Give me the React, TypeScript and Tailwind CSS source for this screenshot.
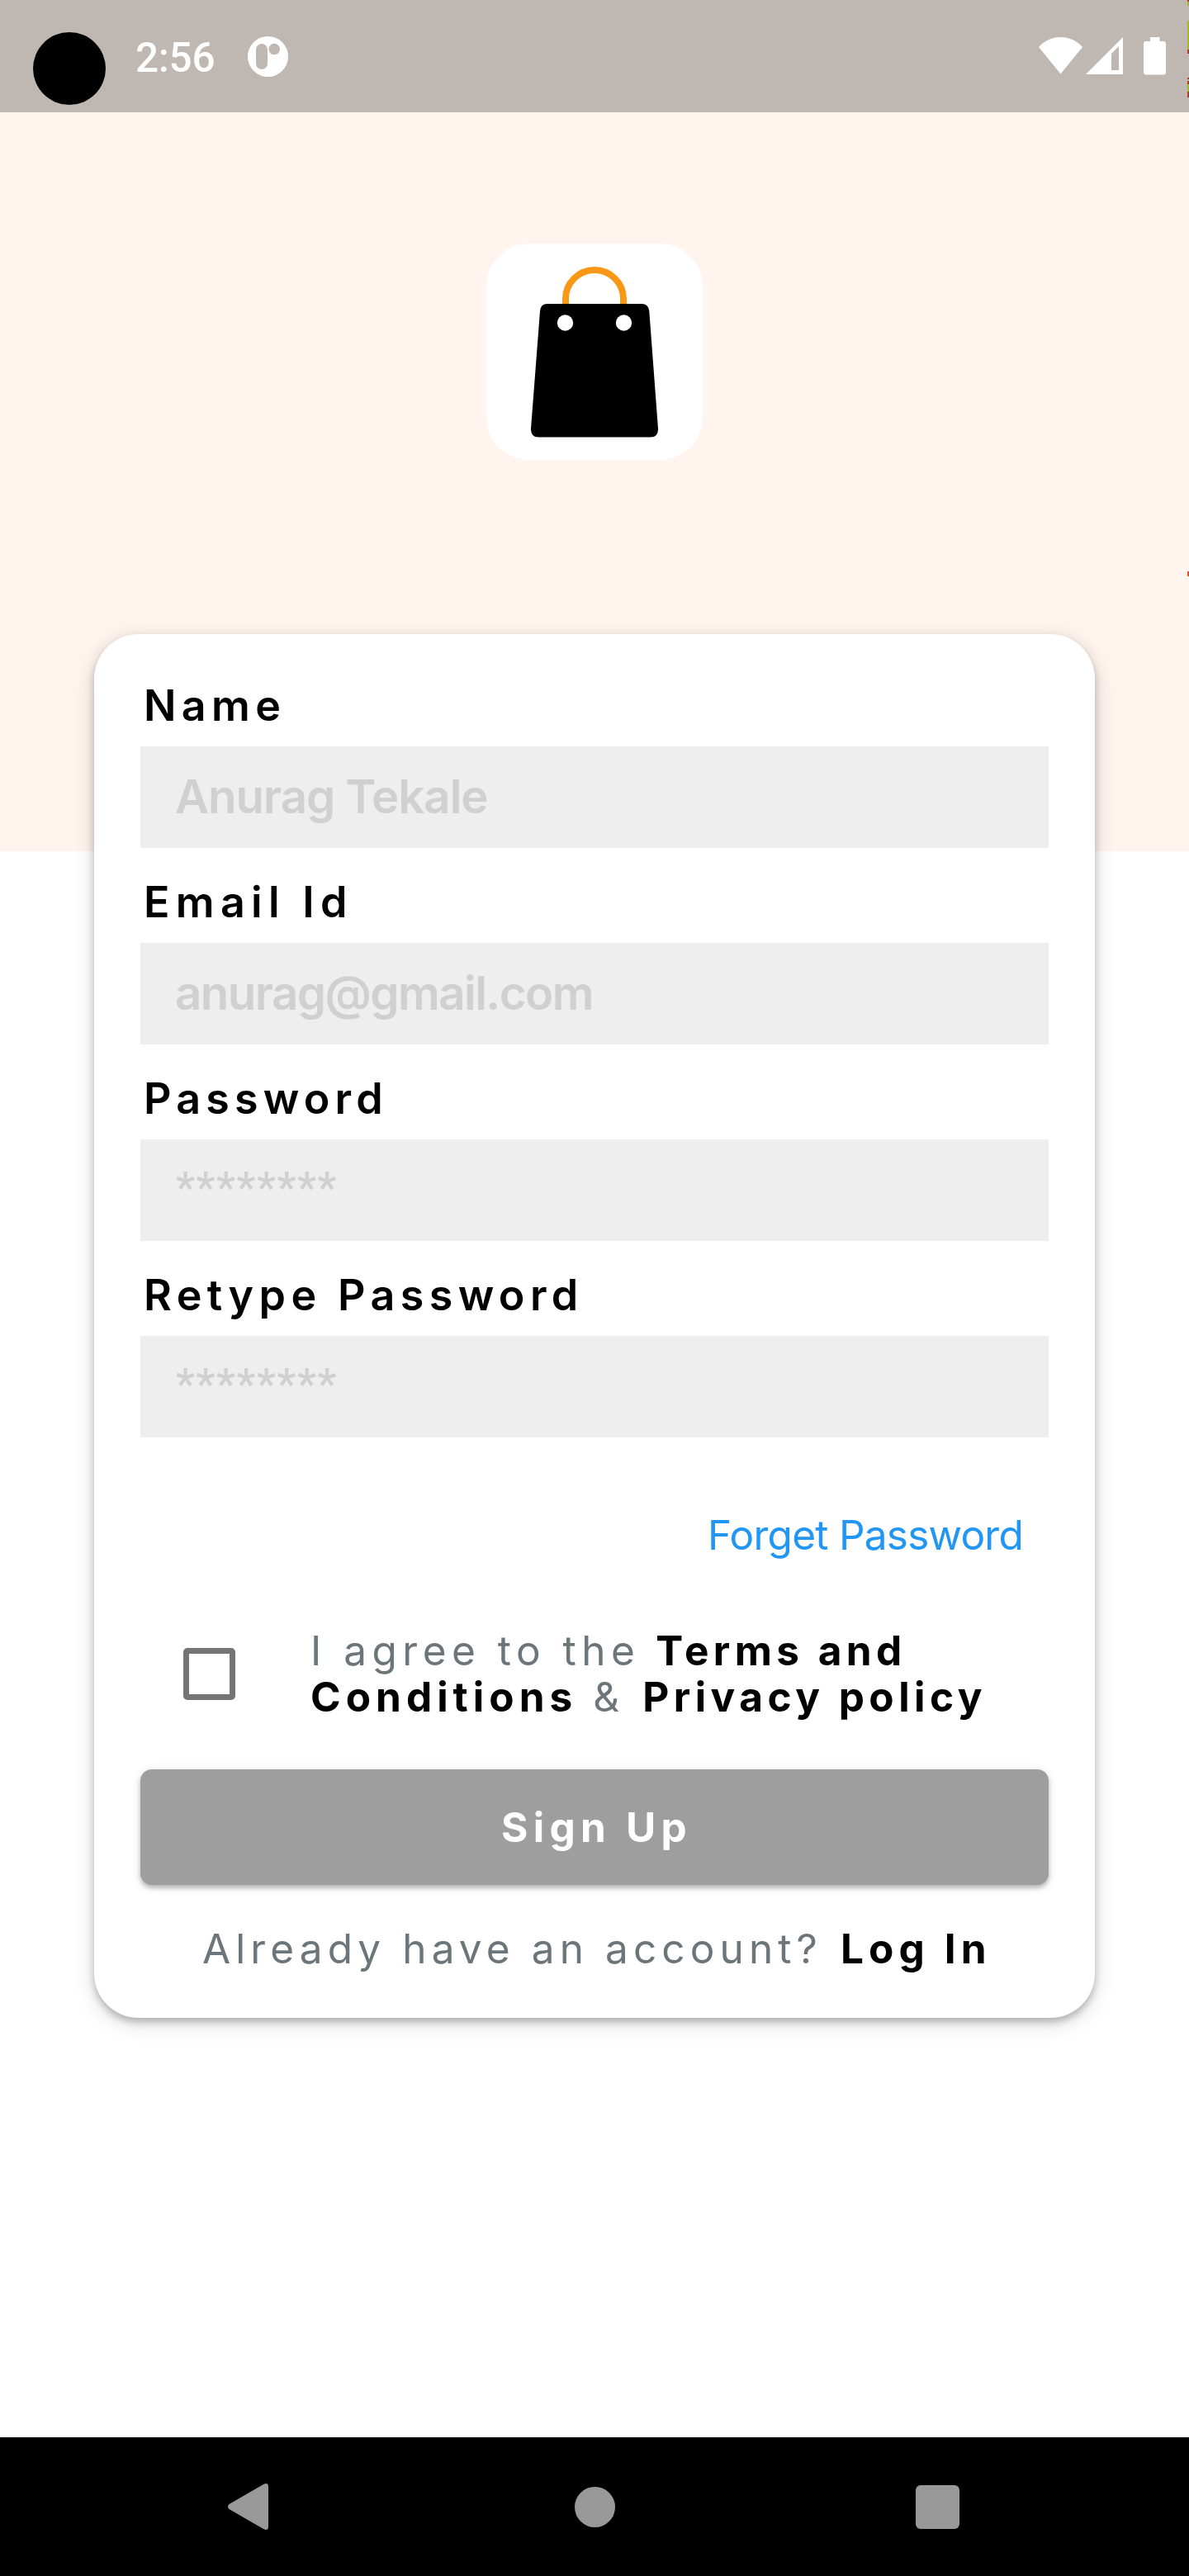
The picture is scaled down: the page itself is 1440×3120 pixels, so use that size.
import React from "react";

function StatusBar() {
  return (
    <header className="relative flex h-[136px] shrink-0 items-start bg-[#bfb7b2] text-white">
      <div className="mt-[39px] ml-[40px] size-[88px] rounded-full bg-black" />
      <span className="mt-[40px] ml-[36px] w-[100px] font-[Roboto,sans-serif] text-[49.5px] leading-[60px] font-medium tracking-[-0.3px]">
        2:56
      </span>
      <svg className="mt-[44px] ml-[36px] size-[49px]" viewBox="0 0 49 49">
        <circle cx="24.5" cy="24.5" r="24.5" fill="#fff" />
        <rect x="10" y="9" width="14" height="31" rx="7" fill="#bfb7b2" />
        <circle cx="32.2" cy="15.5" r="6.8" fill="#bfb7b2" />
      </svg>
      <div className="ml-auto flex pt-[45px] pr-[28px]">
        <svg className="h-[46px] w-[53px]" viewBox="0 0 53 46">
          <path d="M0 12C14-4 39-4 53 12L26.5 44.5Z" fill="#fff" />
        </svg>
        <svg className="ml-[4px] h-[46px] w-[45px]" viewBox="0 0 45 46">
          <path d="M0 45L45 0V45ZM31 20V40H40V11Z" fill="#fff" fillRule="evenodd" />
        </svg>
        <svg className="ml-[25px] h-[46px] w-[27px]" viewBox="0 0 27 46">
          <path
            d="M8 0H19.500V5H24Q27 5 27 8V42.500Q27 45.500 24 45.500H3Q0 45.500 0 42.500V8Q0 5 3 5H8Z"
            fill="#fff"
          />
        </svg>
      </div>
    </header>
  );
}

/* Sliver of a neighbouring surface that shows along the right screen edge */
function EdgeSliver() {
  return (
    <svg className="absolute top-0 right-0 h-[720px] w-[2px]" viewBox="0 0 2 720">
      <path d="M0 0H2V2H0ZM0 60H2V65H0ZM0 94H2V96H0ZM0 98H2V102H0ZM0 111H2V118H0Z" fill="#b23a24" />
      <path d="M0 2H2V7H0ZM0 25H2V60H0ZM0 102H2V111H0Z" fill="#a4b81e" />
      <path d="M0 692H2V698H0Z" fill="#ef4a23" />
    </svg>
  );
}

function AppLogo() {
  return (
    <div className="size-[262px] rounded-[52px] bg-white">
      <svg className="size-full" viewBox="0 0 262 262">
        <path d="M96 74V67A35 35 0 0 1 166 67V74" fill="none" stroke="#f99716" strokeWidth="8" />
        <path
          d="M74 73H188Q196.500 73 197.300 82L208 224Q208.500 234.500 199 234.500H63Q53.500 234.500 54 224L65 82Q65.500 73 74 73Z"
          fill="#000"
        />
        <circle cx="95.500" cy="96" r="9.700" fill="#fff" />
        <circle cx="166.500" cy="96" r="9.700" fill="#fff" />
      </svg>
    </div>
  );
}

type FieldProps = { label: string; labelStyle: string; value: string; valueStyle: string };

function Field({ label, labelStyle, value, valueStyle }: FieldProps) {
  return (
    <div>
      <div
        className={`h-[115.5px] pt-[36.5px] pl-[4px] text-[52px] leading-[60px] font-semibold text-black ${labelStyle}`}
      >
        {label}
      </div>
      <div className={`h-[122.5px] bg-[#eeeeee] text-[#d0d0d0] ${valueStyle}`}>{value}</div>
    </div>
  );
}

const star =
  "pl-[43px] font-[Roboto,sans-serif] text-[51px] font-semibold leading-[118px] tracking-[1.6px]";

function SignUpCard() {
  return (
    <main className="relative mx-auto -mt-[263px] h-[1676px] w-[1212px] rounded-[54px] bg-white px-[56px] pt-[20.5px] shadow-[0_5px_8px_rgba(0,0,0,0.22),0_6px_26px_rgba(0,0,0,0.16)]">
      <Field
        label="Name"
        labelStyle="tracking-[6.38px]"
        value="Anurag Tekale"
        valueStyle="pl-[42px] text-[56.4px] font-semibold leading-[121px] tracking-[-1.07px]"
      />
      <Field
        label="Email Id"
        labelStyle="tracking-[7.29px]"
        value="anurag@gmail.com"
        valueStyle="pl-[42px] text-[56.4px] font-semibold leading-[121px] tracking-[-1.57px]"
      />
      <Field label="Password" labelStyle="tracking-[6.17px]" value="********" valueStyle={star} />
      <Field label="Retype Password" labelStyle="tracking-[6.38px]" value="********" valueStyle={star} />

      <div className="mt-[88.5px] pr-[31px] text-right text-[49.5px] leading-[60px] tracking-[-0.75px] text-[#2196f3]">
        Forget Password
      </div>

      <div className="mt-[82px] flex text-[49.5px] leading-[56px] whitespace-nowrap text-[#6c757a]">
        <div className="mt-[25px] ml-[52px] size-[63px] shrink-0 rounded-[5px] border-7 border-[#757575]" />
        <div className="ml-[91px]">
          <div className="flex">
            <span className="tracking-[6.49px]">I agree to the</span>
            <b className="ml-[19px] tracking-[5.42px] text-black">Terms and</b>
          </div>
          <div className="flex">
            <b className="tracking-[6.04px] text-black">Conditions</b>
            <span className="ml-[19px] tracking-[6px]">&amp;</span>
            <b className="ml-[22px] tracking-[5.48px] text-black">Privacy policy</b>
          </div>
        </div>
      </div>

      <button className="mt-[60px] block h-[140px] w-full rounded-[14px] bg-[#9e9e9e] pb-[1px] pl-[5px] text-[49.5px] leading-[60px] font-bold tracking-[6.27px] text-white shadow-[0_4px_5px_rgba(0,0,0,0.2),0_2px_12px_rgba(0,0,0,0.14)]">
        Sign Up
      </button>

      <div className="mt-[47px] flex pl-[75px] text-[49.5px] leading-[60px] whitespace-nowrap text-[#6c757a]">
        <span className="tracking-[6.11px]">Already have an account?</span>
        <b className="ml-[22px] tracking-[6.1px] text-black">Log In</b>
      </div>
    </main>
  );
}

function NavBar() {
  return (
    <nav className="mt-auto flex h-[168px] shrink-0 items-center bg-black pl-[276px]">
      <svg className="h-[56px] w-[49px]" viewBox="0 0 49 56">
        <path d="M1.500 25L43.500 0.800Q49-1.500 49 4V52Q49 57.500 43.500 55.200L1.500 31Q-1.500 28 1.500 25Z" fill="#999" />
      </svg>
      <div className="ml-[370.5px] size-[49px] rounded-full bg-[#999999]" />
      <div className="ml-[364px] size-[53px] rounded-[6px] bg-[#999999]" />
    </nav>
  );
}

export default function App() {
  return (
    <div className="relative flex h-[3120px] w-[1440px] flex-col overflow-hidden bg-white font-[Inter,sans-serif]">
      <StatusBar />
      <section className="flex h-[895px] shrink-0 justify-center bg-[#fff4ee] pt-[159px]">
        <AppLogo />
      </section>
      <SignUpCard />
      <NavBar />
      <EdgeSliver />
    </div>
  );
}
